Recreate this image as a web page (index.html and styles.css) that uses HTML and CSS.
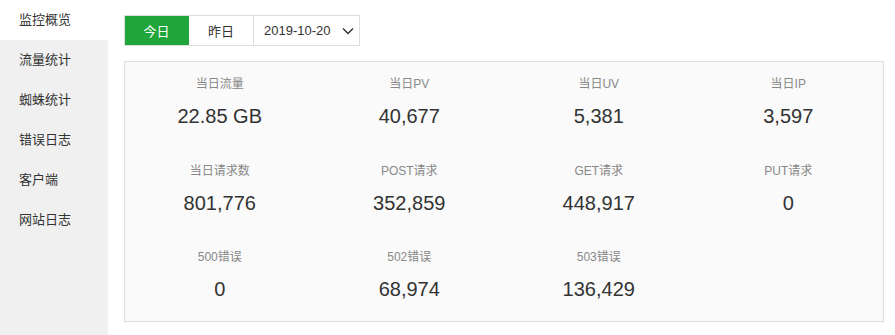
FILE: index.html
```html
<!DOCTYPE html>
<html lang="zh-CN">
<head>
<meta charset="utf-8">
<title>监控概览</title>
<link rel="stylesheet" href="styles.css">
</head>
<body>
<div class="layout">
  <nav class="sidebar">
    <a class="nav-item active">监控概览</a>
    <a class="nav-item">流量统计</a>
    <a class="nav-item">蜘蛛统计</a>
    <a class="nav-item">错误日志</a>
    <a class="nav-item">客户端</a>
    <a class="nav-item">网站日志</a>
  </nav>
  <main class="main">
    <div class="toolbar">
      <div class="btn-group">
        <button class="btn btn-active">今日</button>
        <button class="btn">昨日</button>
        <div class="date-select">
          <span class="date-text">2019-10-20</span>
          <svg class="chevron" width="12" height="8" viewBox="0 0 12 8"><path d="M1 1.5 L6 6.5 L11 1.5" fill="none" stroke="#333" stroke-width="1.5"/></svg>
        </div>
      </div>
    </div>
    <section class="stats">
      <div class="stat"><div class="stat-label">当日流量</div><div class="stat-value">22.85 GB</div></div>
      <div class="stat"><div class="stat-label">当日PV</div><div class="stat-value">40,677</div></div>
      <div class="stat"><div class="stat-label">当日UV</div><div class="stat-value">5,381</div></div>
      <div class="stat"><div class="stat-label">当日IP</div><div class="stat-value">3,597</div></div>
      <div class="stat"><div class="stat-label">当日请求数</div><div class="stat-value">801,776</div></div>
      <div class="stat"><div class="stat-label">POST请求</div><div class="stat-value">352,859</div></div>
      <div class="stat"><div class="stat-label">GET请求</div><div class="stat-value">448,917</div></div>
      <div class="stat"><div class="stat-label">PUT请求</div><div class="stat-value">0</div></div>
      <div class="stat"><div class="stat-label">500错误</div><div class="stat-value">0</div></div>
      <div class="stat"><div class="stat-label">502错误</div><div class="stat-value">68,974</div></div>
      <div class="stat"><div class="stat-label">503错误</div><div class="stat-value">136,429</div></div>
    </section>
  </main>
</div>
</body>
</html>
```

FILE: styles.css
```css
* { box-sizing: border-box; }
html, body { margin: 0; padding: 0; background: #fff; }
body {
  font-family: "Liberation Sans", "Noto Sans CJK SC", Arial, sans-serif;
  color: #333;
  height: 335px;
  overflow: hidden;
}
.layout { display: flex; height: 335px; }
.sidebar {
  width: 108px;
  flex: none;
  background: #f0f0f0;
  display: flex;
  flex-direction: column;
}
.nav-item {
  display: block;
  height: 40px;
  line-height: 40px;
  padding-left: 19px;
  font-size: 13px;
  color: #333;
  cursor: pointer;
}
.nav-item.active { background: #fff; }
.main {
  flex: 1;
  padding: 15px 11px 0 16px;
  min-width: 0;
}
.toolbar { display: flex; }
.btn-group {
  display: flex;
  border: 1px solid #ddd;
  height: 31px;
}
.btn {
  width: 65px;
  height: 29px;
  border: 0;
  border-right: 1px solid #ddd;
  background: #fff;
  color: #333;
  font-family: inherit;
  font-size: 13px;
  padding: 0;
  margin: 0;
  cursor: pointer;
}
.btn-active { background: #20a53a; color: #fff; width: 64px; border-right-color: #20a53a; }
.date-select {
  width: 105px;
  height: 29px;
  display: flex;
  align-items: center;
  padding-left: 10px;
  gap: 11px;
  font-size: 13px;
  color: #333;
}
.chevron { display: block; }
.stats {
  margin-top: 15px;
  border: 1px solid #ddd;
  background: #fafafa;
  display: grid;
  grid-template-columns: repeat(4, 1fr);
  row-gap: 32.5px;
  padding: 12px 0 20px;
}
.stat { text-align: center; }
.stat-label {
  font-size: 12px;
  line-height: 20px;
  color: #888;
}
.stat-value {
  margin-top: 10px;
  font-size: 20px;
  line-height: 24px;
  color: #333;
}
```
